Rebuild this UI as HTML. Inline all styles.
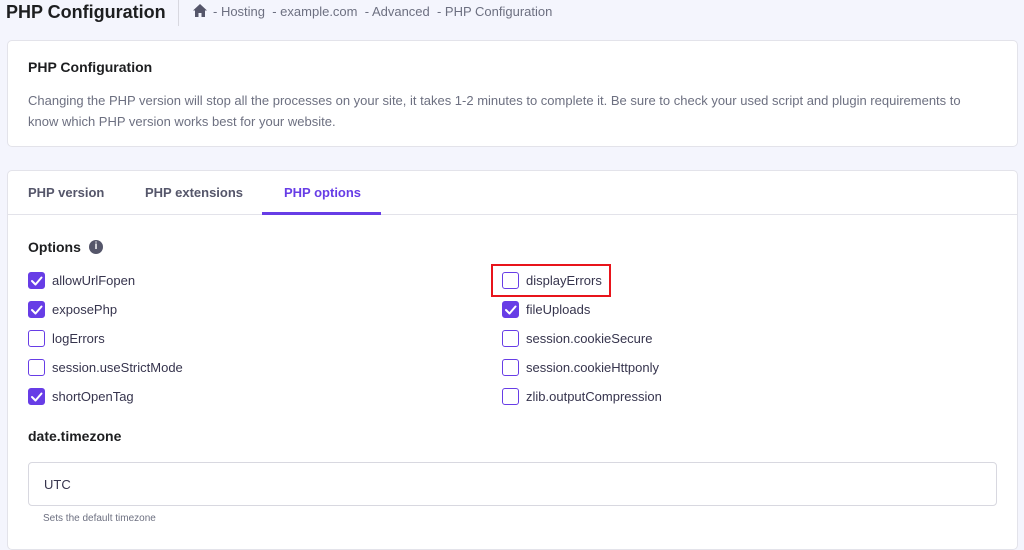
<!DOCTYPE html>
<html><head><style>
*{margin:0;padding:0;box-sizing:border-box}
body{width:1024px;height:528px;overflow:hidden;background:#f4f5fd;font-family:"Liberation Sans",sans-serif;color:#2f1c6a;position:relative}
.a{position:absolute;white-space:nowrap}
.card{position:absolute;left:7px;width:1011px;background:#fff;border:1px solid #e3e3ea;border-radius:5px}
.cb{position:absolute;width:17px;height:17px;border:1.5px solid #673de6;border-radius:3px;background:#fff}
.cb.on{background:#673de6}
.lbl{position:absolute;font-size:13px;color:#36344d;white-space:nowrap}
</style></head><body>
<div class="a" style="left:6px;top:2px;font-size:18px;font-weight:bold;color:#1d1e20">PHP Configuration</div>
<div class="a" style="left:178px;top:0;width:1px;height:26px;background:#d8d8e0"></div>
<svg class="a" style="left:193px;top:4px" width="14" height="13" viewBox="0 0 14 13"><path d="M7 0L0 6.5h2V13h3.5V9h3v4H12V6.5h2z" fill="#55566a"/></svg>
<div class="a" style="left:213px;top:4px;font-size:13px;color:#6d7081">- Hosting &nbsp;- example.com &nbsp;- Advanced &nbsp;- PHP Configuration</div>

<div class="card" style="top:40px;height:107px">
<div class="a" style="left:20px;top:18px;font-size:14px;font-weight:bold;color:#1d1e20">PHP Configuration</div>
<div class="a" style="left:20px;top:49px;font-size:13px;line-height:21px;color:#6d7081;white-space:normal;width:960px">Changing the PHP version will stop all the processes on your site, it takes 1-2 minutes to complete it. Be sure to check your used script and plugin requirements to know which PHP version works best for your website.</div>
</div>

<div class="card" style="top:170px;height:380px">
<div class="a" style="left:0;top:43px;width:1009px;height:1px;background:#e3e3ea"></div>
<div class="a" style="left:20px;top:14px;font-size:13px;font-weight:bold;color:#55566a">PHP version</div>
<div class="a" style="left:137px;top:14px;font-size:13px;font-weight:bold;color:#55566a">PHP extensions</div>
<div class="a" style="left:276px;top:14px;font-size:13px;font-weight:bold;color:#673de6">PHP options</div>
<div class="a" style="left:254px;top:41px;width:119px;height:3px;background:#673de6"></div>
<div class="a" style="left:20px;top:68px;font-size:14px;font-weight:bold;color:#1d1e20">Options</div>
<div class="a" style="left:81px;top:69px;width:14px;height:14px;border-radius:50%;background:#55566a;color:#fff;font-size:10px;font-weight:bold;text-align:center;line-height:14px">i</div>
<div class="a" style="left:20px;top:257px;font-size:14px;font-weight:bold;color:#1d1e20">date.timezone</div>
<div class="a" style="left:20px;top:291px;width:969px;height:44px;border:1px solid #d8d8e0;border-radius:4px"></div>
<div class="a" style="left:36px;top:306px;font-size:13px;color:#36344d">UTC</div>
<div class="a" style="left:35px;top:342px;font-size:10px;color:#6d7081">Sets the default timezone</div>
</div>

<div class="cb on" style="left:28px;top:272px"></div><div class="lbl" style="left:52px;top:273px">allowUrlFopen</div>
<div class="cb on" style="left:28px;top:301px"></div><div class="lbl" style="left:52px;top:302px">exposePhp</div>
<div class="cb" style="left:28px;top:330px"></div><div class="lbl" style="left:52px;top:331px">logErrors</div>
<div class="cb" style="left:28px;top:359px"></div><div class="lbl" style="left:52px;top:360px">session.useStrictMode</div>
<div class="cb on" style="left:28px;top:388px"></div><div class="lbl" style="left:52px;top:389px">shortOpenTag</div>
<div class="cb" style="left:502px;top:272px"></div><div class="lbl" style="left:526px;top:273px">displayErrors</div>
<div class="cb on" style="left:502px;top:301px"></div><div class="lbl" style="left:526px;top:302px">fileUploads</div>
<div class="cb" style="left:502px;top:330px"></div><div class="lbl" style="left:526px;top:331px">session.cookieSecure</div>
<div class="cb" style="left:502px;top:359px"></div><div class="lbl" style="left:526px;top:360px">session.cookieHttponly</div>
<div class="cb" style="left:502px;top:388px"></div><div class="lbl" style="left:526px;top:389px">zlib.outputCompression</div>
<svg class="a" style="left:0;top:0" width="1024" height="528">
<g fill="none" stroke="#fff" stroke-width="2" stroke-linecap="round" stroke-linejoin="round">
<path d="M32 281l3.5 3.5 6-7"/><path d="M32 310l3.5 3.5 6-7"/><path d="M32 397l3.5 3.5 6-7"/><path d="M506 310l3.5 3.5 6-7"/>
</g>
<rect x="492" y="265" width="118" height="31" fill="none" stroke="#e8141b" stroke-width="2"/>
</svg>
</body></html>
